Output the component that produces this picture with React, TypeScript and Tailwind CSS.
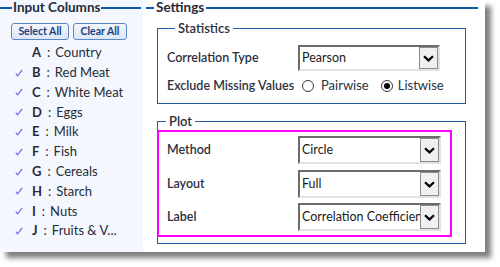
import { ReactNode } from 'react';

const columns = [
  { key: 'A', name: 'Country', checked: false },
  { key: 'B', name: 'Red Meat', checked: true },
  { key: 'C', name: 'White Meat', checked: true },
  { key: 'D', name: 'Eggs', checked: true },
  { key: 'E', name: 'Milk', checked: true },
  { key: 'F', name: 'Fish', checked: true },
  { key: 'G', name: 'Cereals', checked: true },
  { key: 'H', name: 'Starch', checked: true },
  { key: 'I', name: 'Nuts', checked: true },
  { key: 'J', name: 'Fruits & V...', checked: true },
];

function Check({ visible }: { visible: boolean }) {
  return (
    <svg width="8" height="8" viewBox="0 0 8 8" className={visible ? '' : 'invisible'}>
      <path d="M0.8 4.6 L2.6 6.8 L7.2 0.8" fill="none" stroke="#6f62f0" strokeWidth="1.1" />
    </svg>
  );
}

function Chevron() {
  return (
    <svg width="11" height="7" viewBox="0 0 11 7">
      <path d="M1 1.2 L5.5 5.4 L10 1.2" fill="none" stroke="#000" strokeWidth="2.2" />
    </svg>
  );
}

function Select({ value, className }: { value: string; className: string }) {
  return (
    <div
      className={`flex border-2 border-t-[#6b6b6b] border-l-[#6b6b6b] border-b-[#e2e2e2] border-r-[#e2e2e2] bg-white ${className}`}
    >
      <div className="flex-1 overflow-hidden whitespace-nowrap pl-[2px] text-[12.5px] leading-none text-[#1b1b1b] flex items-center">
        {value}
      </div>
      <div className="w-[19px] shrink-0 border border-[#8c8c8c] bg-[#f0f0f0] flex items-center justify-center">
        <Chevron />
      </div>
    </div>
  );
}

function Radio({ checked }: { checked?: boolean }) {
  return (
    <span className="w-[12px] h-[12px] rounded-full border border-[#3a3a3a] bg-white flex items-center justify-center">
      {checked && <span className="w-[6px] h-[6px] rounded-full bg-black" />}
    </span>
  );
}

function Row({ label, children, className = '' }: { label: string; children: ReactNode; className?: string }) {
  return (
    <div className={`flex items-center ${className}`}>
      <span className="w-[131px] shrink-0 whitespace-nowrap text-[12.5px] font-semibold text-[#2b3040]">{label}</span>
      {children}
    </div>
  );
}

function InputColumns() {
  return (
    <aside className="w-[143px] shrink-0 bg-[#f4f8fe] pr-[2px]">
      <div className="flex items-center h-[16px]">
        <span className="w-[12px] h-[2px] bg-[#0f5aa6]" />
        <span className="px-[1px] text-[13.5px] font-bold leading-none text-[#262b38]">Input Columns</span>
        <span className="flex-1 h-[2px] bg-[#0f5aa6]" />
      </div>
      <div className="flex gap-[4px] pl-[11px] mt-[7px]">
        <button className="w-[58px] h-[17px] rounded-[3px] border border-[#5b86c5] bg-gradient-to-b from-[#f3f7fd] to-[#dce7f6] text-[10.5px] font-bold leading-none text-[#1c3e7c]">
          Select All
        </button>
        <button className="w-[54px] h-[17px] rounded-[3px] border border-[#5b86c5] bg-gradient-to-b from-[#f3f7fd] to-[#dce7f6] text-[10.5px] font-bold leading-none text-[#1c3e7c]">
          Clear All
        </button>
      </div>
      <ul className="mt-[3px]">
        {columns.map((c) => (
          <li key={c.key} className="flex items-center h-[19.8px] pl-[15px] text-[13px] text-[#262b38] whitespace-nowrap">
            <Check visible={c.checked} />
            <span className="ml-[9px] font-bold">{c.key}</span>
            <span className="ml-[6px]">:</span>
            <span className="ml-[5px]">{c.name}</span>
          </li>
        ))}
      </ul>
    </aside>
  );
}

function Settings() {
  return (
    <section className="flex-1 pl-[3px] pr-[7px]">
      <div className="flex items-center h-[16px]">
        <span className="w-[8px] h-[2px] bg-[#0f5aa6]" />
        <span className="px-[2px] text-[13.5px] font-bold leading-none text-[#262b38]">Settings</span>
        <span className="flex-1 h-[2px] bg-[#0f5aa6]" />
      </div>

      <fieldset className="mt-[4px] ml-[11px] mr-[12px] border border-[#1f5c9e] pt-[9px] pl-[9px] pb-[7px]">
        <legend className="ml-[8px] px-[3px] text-[13px] font-semibold leading-[16px] text-[#2b3040]">Statistics</legend>
        <Row label="Correlation Type">
          <Select value="Pearson" className="w-[142px] h-[26px]" />
        </Row>
        <Row label="Exclude Missing Values" className="mt-[5px] h-[20px]">
          <span className="ml-[4px]"><Radio /></span>
          <span className="ml-[7px] text-[13px] text-[#2b3040]">Pairwise</span>
          <span className="ml-[12px]"><Radio checked /></span>
          <span className="ml-[5px] text-[13px] text-[#2b3040]">Listwise</span>
        </Row>
      </fieldset>

      <fieldset className="mt-[9px] ml-[11px] mr-[12px] border border-[#1f5c9e] pb-[6px]">
        <legend className="ml-[8px] px-[3px] text-[13px] font-semibold leading-[16px] text-[#2b3040]">Plot</legend>
        <div className="mt-[1px] -ml-[1px] mr-[13px] border-2 border-[#ff00ff] pt-[4px] pl-[8px] pb-[4px]">
          <Row label="Method">
            <Select value="Circle" className="w-[143px] h-[28px]" />
          </Row>
          <Row label="Layout" className="mt-[6px]">
            <Select value="Full" className="w-[143px] h-[28px]" />
          </Row>
          <Row label="Label" className="mt-[5px]">
            <Select value="Correlation Coefficient" className="w-[143px] h-[28px]" />
          </Row>
        </div>
      </fieldset>
    </section>
  );
}

export default function App() {
  return (
    <div className="w-[500px] h-[267px] bg-white font-['Lato',sans-serif]">
      <div className="flex w-[485px] h-[252px] bg-white shadow-[6px_6px_5px_rgba(0,0,0,0.5)]">
        <InputColumns />
        <Settings />
      </div>
    </div>
  );
}
